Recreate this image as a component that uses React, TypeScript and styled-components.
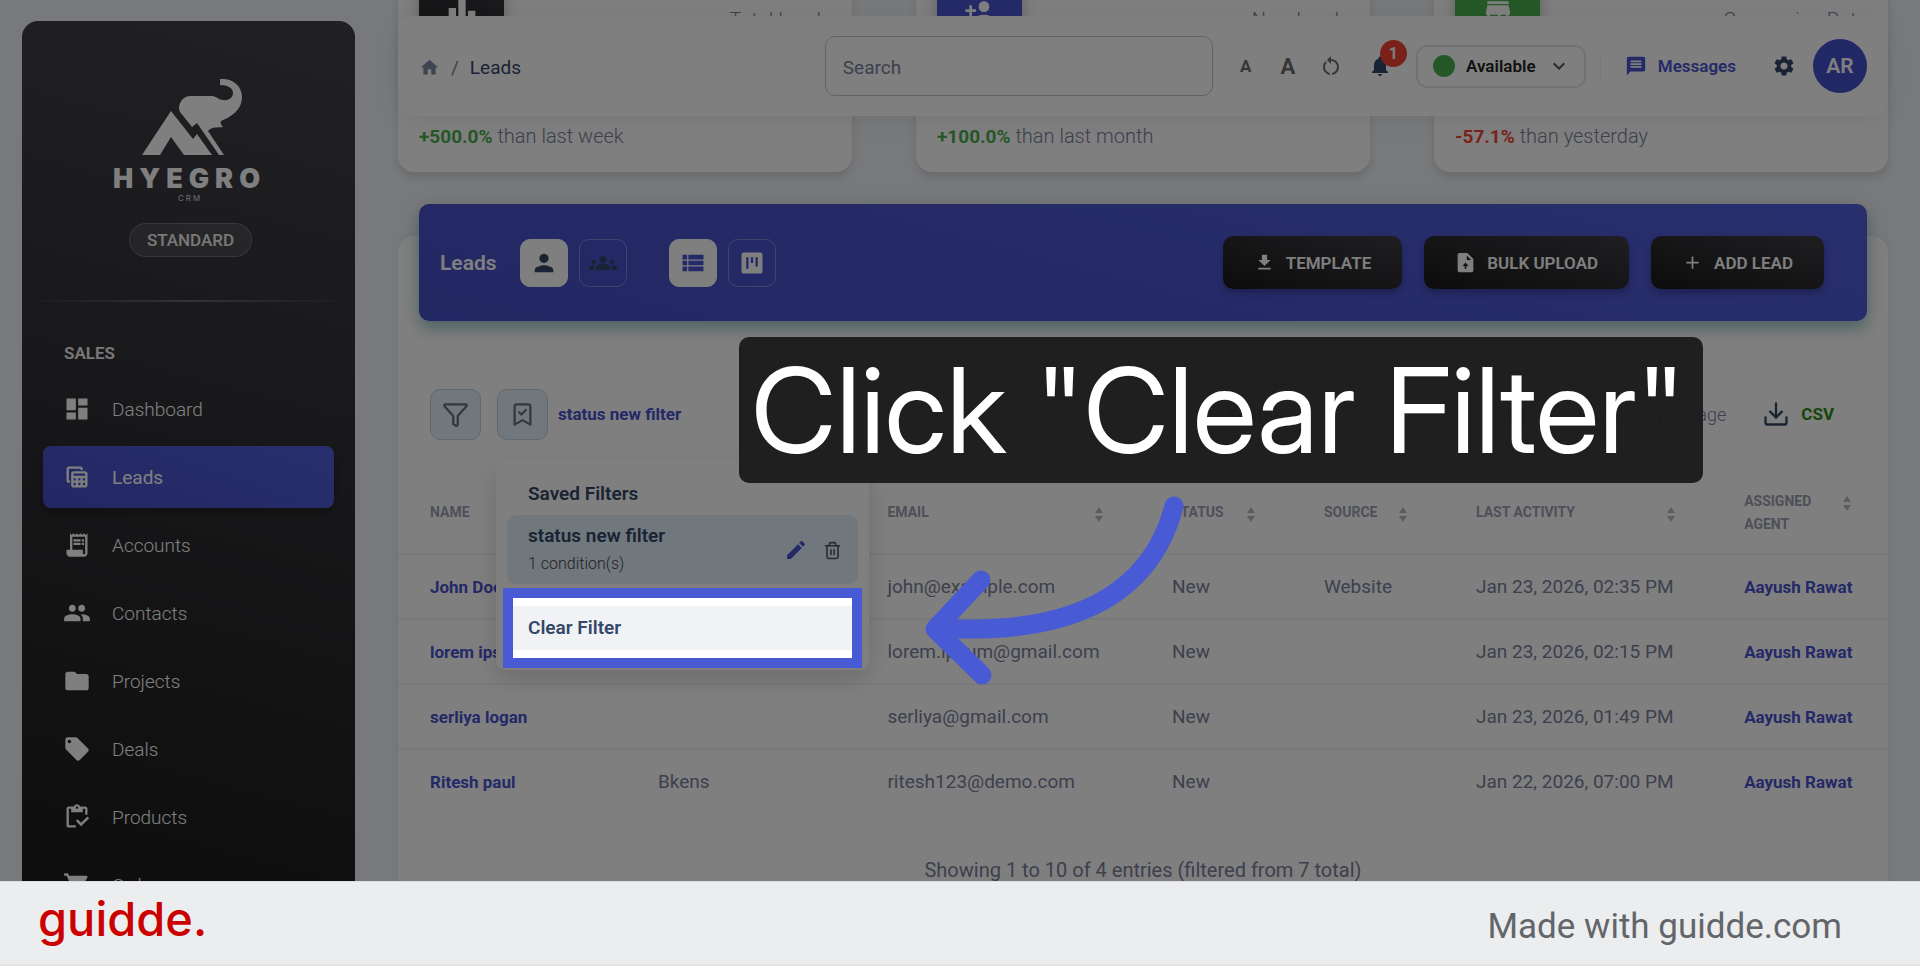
import React from "react";
import styled, { createGlobalStyle, css } from "styled-components";
import {
  MdAdd,
  MdDashboard,
  MdDownload,
  MdEdit,
  MdExpandMore,
  MdFolder,
  MdGroups,
  MdHome,
  MdLeaderboard,
  MdLocalOffer,
  MdMessage,
  MdNotifications,
  MdPeople,
  MdPerson,
  MdPersonAdd,
  MdReceiptLong,
  MdRestartAlt,
  MdSettings,
  MdShoppingCart,
  MdStore,
  MdTableView,
  MdViewKanban,
  MdViewList,
} from "react-icons/md";
import { BookmarkCheck, Download, Filter, Trash2 } from "lucide-react";

const color = {
  page: "#f0f2f5",
  ink: "#344767",
  muted: "#7b809a",
  blue: "#4853d0",
  accent: "#495bd4",
  line: "#f0f2f5",
  tint: "#e0effb",
};

const GlobalStyle = createGlobalStyle`
  * { box-sizing: border-box; }
  body { margin: 0; font-family: Roboto, "Liberation Sans", sans-serif; font-size: 19px; background: ${color.page}; }
  button, input, select { font-family: inherit; margin: 0; }
  a { color: inherit; text-decoration: none; }
`;

const Page = styled.div`
  display: flex;
  flex-direction: column;
  height: 100vh;
  overflow: hidden;
`;

const Stage = styled.div`
  position: relative;
  flex: 1;
  min-height: 0;
  display: flex;
  gap: 43px;
  padding: 0 32px 0 22px;
  overflow: hidden;
  background: ${color.page};
`;

/* ---------- sidebar ---------- */

const Sidebar = styled.aside`
  flex: none;
  width: 333px;
  height: calc(100vh - 42px);
  margin-top: 21px;
  border-radius: 16px;
  background: linear-gradient(195deg, #42424a, #191919);
  color: #fff;
  display: flex;
  flex-direction: column;
  overflow: hidden;
`;

const Brand = styled.div`
  display: flex;
  flex-direction: column;
  align-items: center;
  padding: 56px 0 0 4px;
`;

const Plan = styled.span`
  margin-top: 20px;
  height: 34px;
  padding: 0 17px;
  border: 1px solid rgba(255, 255, 255, 0.2);
  border-radius: 17px;
  background: rgba(255, 255, 255, 0.1);
  font-size: 17px;
  line-height: 32px;
  font-weight: 500;
  color: #f0f0f0;
`;

const Rule = styled.hr`
  width: 100%;
  height: 2px;
  margin: 43px 0 0;
  border: 0;
  background: linear-gradient(90deg, transparent, rgba(255, 255, 255, 0.25), transparent);
`;

const NavTitle = styled.h2`
  margin: 40px 0 14px 42px;
  font-size: 17px;
  line-height: 22px;
  font-weight: 600;
  color: #f0f0f0;
`;

const NavList = styled.nav`
  display: flex;
  flex-direction: column;
  gap: 6px;
  padding: 0 21px;
`;

const NavItem = styled.a<{ $active?: boolean }>`
  display: flex;
  align-items: center;
  gap: 21px;
  height: 62px;
  flex: none;
  padding-left: 20px;
  border-radius: 8px;
  font-size: 19px;
  font-weight: ${(p) => (p.$active ? 400 : 300)};
  ${(p) =>
    p.$active &&
    css`
      background: linear-gradient(20deg, #4650c8, #525ddb);
      box-shadow: 0 4px 8px rgba(0, 0, 0, 0.3);
    `}
  svg {
    width: 28px;
    height: 28px;
  }
`;

/* ---------- main column ---------- */

const Main = styled.main`
  flex: 1;
  min-width: 0;
`;

const TopBar = styled.header`
  position: absolute;
  z-index: 5;
  top: 16px;
  left: 398px;
  right: 32px;
  height: 100px;
  padding: 0 21px;
  display: flex;
  align-items: center;
  border-radius: 16px;
  background: #fff;
  box-shadow: 0 4px 24px rgba(0, 0, 0, 0.07);
`;

const Crumbs = styled.nav`
  flex: 1;
  display: flex;
  align-items: center;
  gap: 11px;
  padding-top: 3px;
  color: ${color.ink};
  a {
    display: flex;
  }
  svg {
    width: 21px;
    height: 21px;
    color: #7d8aa3;
  }
  span {
    color: ${color.muted};
  }
`;

const SearchBox = styled.input<{ $size?: "small" }>`
  width: ${(p) => (p.$size === "small" ? "256px" : "388px")};
  height: 60px;
  padding: 3px 17px 0;
  border: 1px solid #c4c7cc;
  border-radius: 10px;
  background: transparent;
  font-size: 19px;
  color: ${color.ink};
  &::placeholder {
    color: ${color.muted};
    opacity: 1;
  }
`;

const Tools = styled.div`
  display: flex;
  align-items: center;
  margin-left: 21px;
`;

const ToolButton = styled.button<{ $w: number; $glyph?: number; $dark?: boolean }>`
  position: relative;
  width: ${(p) => p.$w}px;
  height: 40px;
  padding: 0;
  border: 0;
  background: none;
  display: flex;
  align-items: center;
  justify-content: center;
  font-weight: 700;
  font-size: ${(p) => p.$glyph ?? 19}px;
  color: ${(p) => (p.$dark ? color.ink : "#6c6c6c")};
  svg {
    width: 24px;
    height: 24px;
  }
`;

const Badge = styled.span`
  position: absolute;
  top: -6px;
  right: 9px;
  width: 27px;
  height: 27px;
  border-radius: 50%;
  background: #f44335;
  color: #fff;
  font-size: 16px;
  line-height: 27px;
  text-align: center;
`;

const StatusButton = styled.button`
  display: flex;
  align-items: center;
  justify-content: space-between;
  width: 170px;
  height: 43px;
  margin: 0 14px 0 0;
  padding: 0 13px 0 15px;
  border: 2px solid #e3e5e9;
  border-radius: 11px;
  background: none;
  font-size: 17px;
  font-weight: 600;
  color: #222;
  i {
    width: 22px;
    height: 22px;
    border-radius: 50%;
    background: #4caf50;
  }
  svg {
    width: 24px;
    height: 24px;
    color: #555;
  }
`;

const MessagesLink = styled.a`
  display: flex;
  align-items: center;
  gap: 11px;
  padding-left: 24px;
  margin-right: 36px;
  border-left: 1px solid #eceef1;
  font-size: 17px;
  line-height: 24px;
  font-weight: 600;
  color: ${color.blue};
  svg {
    width: 22px;
    height: 22px;
  }
`;

const Avatar = styled.button`
  width: 54px;
  height: 54px;
  margin-left: 17px;
  padding: 0;
  border: 0;
  border-radius: 50%;
  background: #4550cc;
  color: #fff;
  font-size: 21px;
  font-weight: 600;
`;

const Stats = styled.section`
  display: grid;
  grid-template-columns: repeat(3, 1fr);
  gap: 64px;
  margin-top: -52px;
`;

const StatCard = styled.article`
  display: flex;
  flex-direction: column;
  justify-content: space-between;
  height: 224px;
  padding: 21px 21px 23px;
  border-radius: 16px;
  background: #fff;
  box-shadow: 0 5px 8px rgba(0, 0, 0, 0.12);
`;

const StatHead = styled.div`
  display: flex;
  justify-content: space-between;
  color: ${color.muted};
  font-size: 20px;
  font-weight: 300;
  line-height: 24px;
`;

const StatIcon = styled.div<{ $bg: string }>`
  display: flex;
  align-items: center;
  justify-content: center;
  width: 85px;
  height: 85px;
  border-radius: 16px;
  background: ${(p) => p.$bg};
  color: #fff;
  box-shadow: 0 5px 16px rgba(0, 0, 0, 0.25);
  svg {
    width: 32px;
    height: 32px;
  }
`;

const StatLabel = styled.span`
  align-self: flex-end;
  margin-bottom: 22px;
`;

const StatNote = styled.p<{ $tone: string }>`
  margin: 0;
  font-size: 20px;
  line-height: 24px;
  font-weight: 300;
  color: ${color.muted};
  b {
    font-size: 19px;
    font-weight: 700;
    color: ${(p) => p.$tone};
  }
`;

const Panel = styled.section`
  margin-top: 64px;
  height: 800px;
  border-radius: 16px;
  background: #fff;
  box-shadow: 0 0 8px rgba(0, 0, 0, 0.06);
`;

const Banner = styled.div`
  position: relative;
  top: -32px;
  display: flex;
  align-items: center;
  height: 117px;
  margin: 0 21px -32px;
  padding: 0 43px 0 21px;
  border-radius: 10px;
  background: linear-gradient(15deg, #464fc6, #525ddb);
  box-shadow: 0 5px 24px rgba(0, 0, 0, 0.12), 0 8px 14px rgba(0, 140, 150, 0.3);
  color: #fff;
`;

const BannerTitle = styled.h1`
  margin: 0 23px 0 0;
  font-size: 21px;
  line-height: 26px;
  font-weight: 600;
`;

const Toggles = styled.div`
  display: flex;
  gap: 11px;
  margin-right: 42px;
`;

const Toggle = styled.button<{ $on?: boolean; $ink: string }>`
  width: 48px;
  height: 48px;
  padding: 0;
  display: flex;
  align-items: center;
  justify-content: center;
  border: 1px solid ${(p) => (p.$on ? "#fff" : "rgba(255, 255, 255, 0.3)")};
  border-radius: 10px;
  background: ${(p) => (p.$on ? "#fff" : "transparent")};
  color: ${(p) => p.$ink};
  svg {
    width: 28px;
    height: 28px;
  }
`;

const Actions = styled.div`
  display: flex;
  gap: 22px;
  margin-left: auto;
`;

const ActionButton = styled.button`
  display: flex;
  align-items: center;
  gap: 11px;
  height: 53px;
  padding: 0 31px;
  border: 0;
  border-radius: 10px;
  background: linear-gradient(15deg, #191919, #3e3e45);
  box-shadow: 0 4px 6px rgba(0, 0, 0, 0.25);
  color: #fff;
  font-size: 17px;
  font-weight: 600;
  svg {
    width: 21px;
    height: 21px;
  }
`;

const Toolbar = styled.div`
  display: flex;
  align-items: center;
  gap: 16px;
  height: 148px;
  padding: 38px 54px 0 32px;
`;

const SquareButton = styled.button`
  display: flex;
  align-items: center;
  justify-content: center;
  width: 51px;
  height: 51px;
  padding: 0;
  border: 1px solid #c9cfd6;
  border-radius: 10px;
  background: ${color.tint};
  color: #6a7076;
`;

const SavedWrap = styled.div`
  position: relative;
  display: flex;
  align-items: center;
  gap: 10px;
  font-size: 17px;
  line-height: 22px;
  font-weight: 700;
  color: ${color.blue};
`;

const SearchSlot = styled.div`
  margin-left: auto;
`;

const PageSize = styled.label`
  display: flex;
  align-items: center;
  gap: 8px;
  padding-left: 6px;
  font-size: 18px;
  font-weight: 300;
  color: ${color.muted};
`;

const SizeSelect = styled.select`
  width: 106px;
  height: 58px;
  padding: 0 14px;
  border: 1px solid #d6d9de;
  border-radius: 10px;
  background: #fff;
  font-size: 19px;
  color: #333;
`;

const CsvButton = styled.button`
  display: flex;
  align-items: center;
  gap: 11px;
  margin-left: 20px;
  padding: 0;
  border: 0;
  background: none;
  font-size: 17px;
  font-weight: 700;
  color: #2e8b12;
  svg {
    color: ${color.ink};
  }
`;

/* ---------- saved filter popup ---------- */

const Popup = styled.div`
  position: absolute;
  z-index: 10;
  top: 71px;
  left: -1px;
  width: 373px;
  padding: 22px 11px 10px;
  border-radius: 10px;
  background: #fff;
  box-shadow: 0 10px 24px rgba(0, 0, 0, 0.15);
  color: ${color.ink};
`;

const PopupTitle = styled.h3`
  margin: 0 0 9px 21px;
  font-size: 19px;
  line-height: 24px;
  font-weight: 600;
`;

const SavedFilter = styled.div`
  display: flex;
  align-items: center;
  height: 69px;
  padding: 2px 16px 0 21px;
  border-radius: 9px;
  background: ${color.tint};
`;

const SavedText = styled.div`
  flex: 1;
  font-size: 19px;
  line-height: 28px;
  font-weight: 600;
  small {
    display: block;
    font-size: 16px;
    line-height: 28px;
    font-weight: 300;
    color: #444;
  }
`;

const IconButton = styled.button<{ $ink: string }>`
  display: flex;
  margin-left: 15px;
  padding: 0;
  border: 0;
  background: none;
  color: ${(p) => p.$ink};
`;

/* The spread shadow darkens everything around the spotlit row. */
const Spotlight = styled.div`
  position: relative;
  margin: 4px -4px -8px;
  padding: 8px 0;
  border: 10px solid ${color.accent};
  background: #fff;
  box-shadow: 0 0 0 4000px rgba(0, 0, 0, 0.5);
`;

const ClearButton = styled.button`
  display: block;
  width: 100%;
  height: 44px;
  padding: 0 15px;
  border: 0;
  background: ${color.page};
  text-align: left;
  font-size: 19px;
  font-weight: 600;
  color: ${color.ink};
`;

/* ---------- table ---------- */

const Table = styled.table`
  width: 100%;
  table-layout: fixed;
  border-collapse: collapse;
`;

const HeadCell = styled.th`
  height: 85px;
  padding: 3px 37px 0 32px;
  border-bottom: 2px solid ${color.line};
  text-align: left;
  font-size: 14px;
  line-height: 23px;
  font-weight: 700;
  color: #9c9fb2;
`;

const HeadInner = styled.div`
  display: flex;
  justify-content: space-between;
  svg {
    flex: none;
    margin-top: 6px;
  }
`;

const Cell = styled.td`
  height: 65px;
  padding: 0 0 0 32px;
  font-size: 19px;
  line-height: 24px;
  color: ${color.muted};
  white-space: nowrap;
  tr:not(:last-child) > & {
    border-bottom: 2px solid ${color.line};
  }
  a {
    font-size: 17px;
    font-weight: 700;
    color: ${color.blue};
  }
`;

const Showing = styled.p`
  margin: 44px 0 0;
  text-align: center;
  font-size: 20px;
  line-height: 24px;
  color: ${color.muted};
`;

/* ---------- walkthrough overlay ---------- */

const Callout = styled.div`
  position: absolute;
  z-index: 20;
  top: 337px;
  left: 739px;
  height: 146px;
  padding: 0 18px 0 12px;
  border-radius: 10px;
  background: rgba(26, 26, 26, 0.94);
  color: #fff;
  font-family: "Inter Display", "InterDisplay", Inter, sans-serif;
  font-size: 118px;
  line-height: 146px;
  white-space: nowrap;
`;

const Arrow = styled.svg`
  position: absolute;
  z-index: 20;
  top: 490px;
  left: 920px;
  fill: none;
  stroke: ${color.accent};
  stroke-width: 19;
  stroke-linecap: round;
  stroke-linejoin: round;
`;

const Credit = styled.footer`
  flex: none;
  display: flex;
  align-items: center;
  justify-content: space-between;
  height: 85px;
  padding: 0 78px 0 38px;
  border-top: 1px solid #dcdde0;
  border-bottom: 2px solid #e2e3e5;
  background: #ecedef;
  font-size: 35px;
  line-height: 44px;
  color: #626569;
`;

const Wordmark = styled.a`
  padding-bottom: 8px;
  font-family: Inter, sans-serif;
  font-size: 47px;
  line-height: 56px;
  font-weight: 500;
  color: #cb0000;
`;

const Made = styled.span`
  padding-top: 8px;
`;

const Logo = () => (
  <svg width="156" height="126" viewBox="0 0 156 126" fill="#fff" role="img" aria-label="Hyegro CRM">
    <path d="M29 78L58 34L80 62L84 57L99 78H71L58 60L47 78Z" />
    <path d="M66 30C67 24 71 19 77 19H99C103 19 106 23 110 23C115 24 120 21 120 16C120 11 115 8 107 8V2C120 1 129 9 129 20C129 33 118 40 108 44C107 46 109 49 110 50C105 51 99 49 95 54L111 78H106L84 46L79 50L67 35Q66 33 66 30Z" />
    <text x="0" y="111" fontFamily="Inter, sans-serif" fontSize="27" fontWeight="900" letterSpacing="6">
      HYEGRO
    </text>
    <text x="65" y="124" fontFamily="Inter, sans-serif" fontSize="8" letterSpacing="2" opacity="0.8">
      CRM
    </text>
  </svg>
);

const ClipboardCheck = () => (
  <svg viewBox="0 0 24 24" fill="currentColor" aria-hidden="true">
    <path d="M5 5h2v3h10V5h2v5h2V5c0-1.1-.9-2-2-2h-4.18C14.4 1.84 13.3 1 12 1s-2.4.84-2.82 2H5c-1.1 0-2 .9-2 2v14c0 1.1.9 2 2 2h6v-2H5V5zm7-2c.55 0 1 .45 1 1s-.45 1-1 1-1-.45-1-1 .45-1 1-1z" />
    <path d="M21 11.5L15.51 17l-3.01-3-1.5 1.5 4.51 4.5L22.5 13z" />
  </svg>
);

const FileUpload = () => (
  <svg viewBox="0 0 24 24" fill="currentColor" fillRule="evenodd" aria-hidden="true">
    <path d="M14 1H5C3.9 1 3 1.9 3 3v18c0 1.1.9 2 2 2h14c1.1 0 2-.9 2-2V8zM13.5 9V4l5 5zM11 19v-3H8.5l3.5-4 3.5 4H13v3z" />
  </svg>
);

const SortMark = () => (
  <svg width="8" height="15" viewBox="0 0 8 15" fill="#b8bbc8" aria-hidden="true">
    <path d="M4 0L8 6H0ZM4 15L0 9H8Z" />
  </svg>
);

const navItems = [
  { label: "Dashboard", Icon: MdDashboard },
  { label: "Leads", Icon: MdTableView, active: true },
  { label: "Accounts", Icon: MdReceiptLong },
  { label: "Contacts", Icon: MdPeople },
  { label: "Projects", Icon: MdFolder },
  { label: "Deals", Icon: MdLocalOffer },
  { label: "Products", Icon: ClipboardCheck },
  { label: "Orders", Icon: MdShoppingCart },
];

const stats = [
  { label: "Total Leads", Icon: MdLeaderboard, bg: "linear-gradient(195deg, #42424a, #191919)", change: "+500.0%", note: "than last week", tone: "#4caf50" },
  { label: "New Leads", Icon: MdPersonAdd, bg: "#4a55d2", change: "+100.0%", note: "than last month", tone: "#4caf50" },
  { label: "Conversion Rate", Icon: MdStore, bg: "#4caf50", change: "-57.1%", note: "than yesterday", tone: "#f44335" },
];

const columns = [
  { label: "NAME", width: "15.3%" },
  { label: "COMPANY", width: "15.4%" },
  { label: "EMAIL", width: "19.1%" },
  { label: "STATUS", width: "10.2%" },
  { label: "SOURCE", width: "10.2%" },
  { label: "LAST ACTIVITY", width: "18%" },
  { label: "ASSIGNED AGENT", width: "11.8%" },
];

const leads = [
  { name: "John Doe", company: "", email: "john@example.com", status: "New", source: "Website", last: "Jan 23, 2026, 02:35 PM" },
  { name: "lorem ipsum", company: "", email: "lorem.ipsum@gmail.com", status: "New", source: "", last: "Jan 23, 2026, 02:15 PM" },
  { name: "serliya logan", company: "", email: "serliya@gmail.com", status: "New", source: "", last: "Jan 23, 2026, 01:49 PM" },
  { name: "Ritesh paul", company: "Bkens", email: "ritesh123@demo.com", status: "New", source: "", last: "Jan 22, 2026, 07:00 PM" },
];

const App: React.FC = () => (
  <Page>
    <GlobalStyle />
    <Stage>
      <Sidebar>
        <Brand>
          <Logo />
          <Plan>STANDARD</Plan>
        </Brand>
        <Rule />
        <NavTitle>SALES</NavTitle>
        <NavList aria-label="Sales">
          {navItems.map(({ label, Icon, active }) => (
            <NavItem key={label} href="#" $active={active}>
              <Icon />
              {label}
            </NavItem>
          ))}
        </NavList>
      </Sidebar>

      <TopBar>
        <Crumbs aria-label="Breadcrumb">
          <a href="#" aria-label="Home">
            <MdHome />
          </a>
          <span>/</span>
          <a href="#">Leads</a>
        </Crumbs>
        <SearchBox type="search" placeholder="Search" aria-label="Search" />
        <Tools>
          <ToolButton $w={24} $glyph={17} aria-label="Smaller text">A</ToolButton>
          <ToolButton $w={60} $glyph={22} aria-label="Larger text">A</ToolButton>
          <ToolButton $w={26} aria-label="Reset text size">
            <MdRestartAlt />
          </ToolButton>
          <ToolButton $w={72} $dark aria-label="Notifications">
            <MdNotifications />
            <Badge>1</Badge>
          </ToolButton>
          <StatusButton>
            <i />
            Available
            <MdExpandMore />
          </StatusButton>
          <MessagesLink href="#">
            <MdMessage />
            Messages
          </MessagesLink>
          <ToolButton $w={24} $dark aria-label="Settings">
            <MdSettings />
          </ToolButton>
          <Avatar>AR</Avatar>
        </Tools>
      </TopBar>

      <Main>
        <Stats>
          {stats.map(({ label, Icon, bg, change, note, tone }) => (
            <StatCard key={label}>
              <StatHead>
                <StatIcon $bg={bg}>
                  <Icon />
                </StatIcon>
                <StatLabel>{label}</StatLabel>
              </StatHead>
              <StatNote $tone={tone}>
                <b>{change}</b> {note}
              </StatNote>
            </StatCard>
          ))}
        </Stats>

        <Panel>
          <Banner>
            <BannerTitle>Leads</BannerTitle>
            <Toggles>
              <Toggle $on $ink={color.ink} aria-label="My leads">
                <MdPerson />
              </Toggle>
              <Toggle $ink={color.ink} aria-label="Team leads">
                <MdGroups />
              </Toggle>
            </Toggles>
            <Toggles>
              <Toggle $on $ink={color.blue} aria-label="List view">
                <MdViewList />
              </Toggle>
              <Toggle $ink="#fff" aria-label="Board view">
                <MdViewKanban />
              </Toggle>
            </Toggles>
            <Actions>
              <ActionButton>
                <MdDownload />
                TEMPLATE
              </ActionButton>
              <ActionButton>
                <FileUpload />
                BULK UPLOAD
              </ActionButton>
              <ActionButton>
                <MdAdd />
                ADD LEAD
              </ActionButton>
            </Actions>
          </Banner>

          <Toolbar>
            <SquareButton aria-label="Filter">
              <Filter size={27} />
            </SquareButton>
            <SavedWrap>
              <SquareButton aria-label="Saved filters">
                <BookmarkCheck size={27} />
              </SquareButton>
              status new filter
              <Popup>
                <PopupTitle>Saved Filters</PopupTitle>
                <SavedFilter>
                  <SavedText>
                    status new filter
                    <small>1 condition(s)</small>
                  </SavedText>
                  <IconButton $ink={color.blue} aria-label="Edit filter">
                    <MdEdit size={24} />
                  </IconButton>
                  <IconButton $ink="#555" aria-label="Delete filter">
                    <Trash2 size={19} />
                  </IconButton>
                </SavedFilter>
                <Spotlight>
                  <ClearButton>Clear Filter</ClearButton>
                </Spotlight>
              </Popup>
            </SavedWrap>
            <SearchSlot>
              <SearchBox $size="small" type="search" placeholder="Search..." aria-label="Search leads" />
            </SearchSlot>
            <PageSize>
              <SizeSelect defaultValue="10">
                <option>10</option>
              </SizeSelect>
              entries per page
            </PageSize>
            <CsvButton>
              <Download size={28} />
              CSV
            </CsvButton>
          </Toolbar>

          <Table>
            <colgroup>
              {columns.map((c) => (
                <col key={c.label} width={c.width} />
              ))}
            </colgroup>
            <thead>
              <tr>
                {columns.map((c) => (
                  <HeadCell key={c.label}>
                    <HeadInner>
                      {c.label}
                      <SortMark />
                    </HeadInner>
                  </HeadCell>
                ))}
              </tr>
            </thead>
            <tbody>
              {leads.map((l) => (
                <tr key={l.name}>
                  <Cell>
                    <a href="#">{l.name}</a>
                  </Cell>
                  <Cell>{l.company}</Cell>
                  <Cell>{l.email}</Cell>
                  <Cell>{l.status}</Cell>
                  <Cell>{l.source}</Cell>
                  <Cell>{l.last}</Cell>
                  <Cell>
                    <a href="#">Aayush Rawat</a>
                  </Cell>
                </tr>
              ))}
            </tbody>
          </Table>
          <Showing>Showing 1 to 10 of 4 entries (filtered from 7 total)</Showing>
        </Panel>
      </Main>

      <Callout>Click "Clear Filter"</Callout>
      <Arrow width="270" height="200" viewBox="0 0 270 200" aria-hidden="true">
        <path d="M254 16C230 108 148 146 18 138M61 90L15 139L62 185" />
      </Arrow>
    </Stage>
    <Credit>
      <Wordmark href="#">guidde.</Wordmark>
      <Made>Made with guidde.com</Made>
    </Credit>
  </Page>
);

export default App;
